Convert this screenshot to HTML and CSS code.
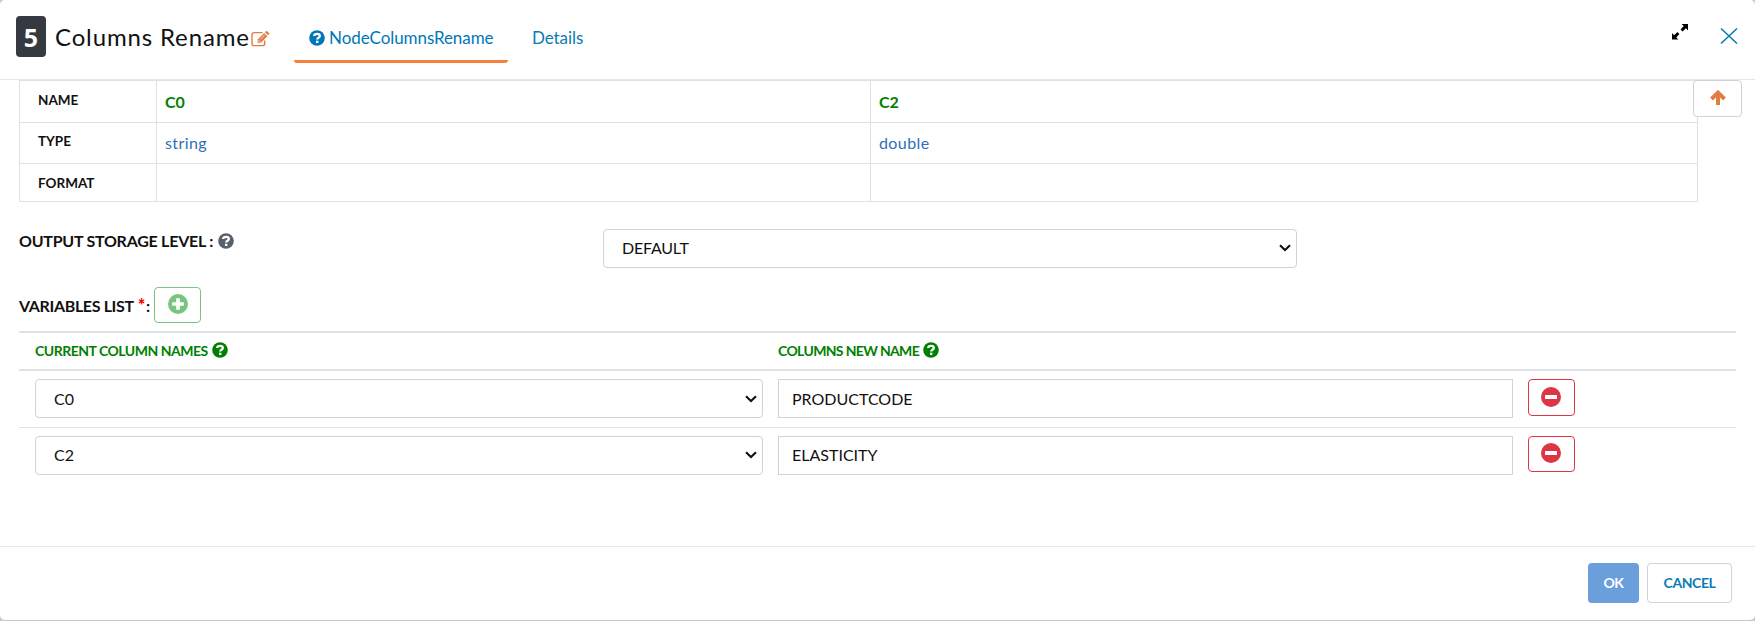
FILE: index.html
```html
<!DOCTYPE html>
<html lang="en">
<head>
<meta charset="utf-8">
<title>Columns Rename</title>
<link rel="stylesheet" href="styles.css">
</head>
<body>
<svg class="defs" width="0" height="0">
  <symbol id="help" viewBox="0 0 16 16"><circle cx="8" cy="8" r="7.8" fill="currentColor"/><path d="M5.2 6C5.4 3.1 10.8 3.1 10.8 6C10.8 7.8 8.2 7.7 8.2 9.6" fill="none" stroke="#fff" stroke-width="2.3"/><rect x="7" y="10.7" width="2.4" height="2.3" fill="#fff"/></symbol>
  <symbol id="minus" viewBox="0 0 20 20"><circle cx="10" cy="10" r="10" fill="currentColor"/><rect x="4" y="8" width="12" height="4" rx=".5" fill="#fff"/></symbol>
  <symbol id="chevron" viewBox="0 0 12 8"><path d="M1 1.2L6 6L11 1.2" fill="none" stroke="#111" stroke-width="2.1"/></symbol>
</svg>
<div class="modal">
  <header class="header">
    <span class="badge">5</span>
    <h1 class="title">Columns Rename</h1>
    <svg class="edit" viewBox="0 0 19 16"><path d="M11.5 1.6H3.2Q1 1.6 1 3.8V12.4Q1 14.6 3.2 14.6H11.5Q13.7 14.6 13.7 12.4V9.6" fill="none" stroke="#e27c45" stroke-width="1.4"/><path d="M6.6 8.6L13.2 2L16.4 5.2L9.8 11.8H6.6Z" fill="#e27c45"/><path d="M14 1.2L15 .3Q15.6-.2 16.2.3L18 2.1Q18.6 2.7 18 3.4L17.1 4.3Z" fill="#e27c45"/><path d="M7.6 9.2L9.3 10.9" stroke="#fff"/><path d="M9.4 8.2L13.6 4" stroke="#fff" stroke-width=".7"/></svg>
    <nav class="tabs">
      <a class="tab active"><svg class="help"><use href="#help"/></svg><span>NodeColumnsRename</span></a>
      <a class="tab"><span>Details</span></a>
    </nav>
    <svg class="expand" viewBox="0 0 16 16"><path d="M9.6 0H16V6.4L13.9 4.3L10.6 7.4L8.6 5.4L11.7 2.1ZM6.4 15.5H0V9.1L2.1 11.2L5.4 8L7.4 10L4.3 13.4Z" fill="#000"/></svg>
    <svg class="close" viewBox="0 0 18 16"><path d="M1 .5L17 15.5M17 .5L1 15.5" stroke="#0a7cb3" stroke-width="1.5"/></svg>
  </header>
  <main class="body">
    <table class="schema">
      <tr class="r1"><th>NAME</th><td class="col">C0</td><td class="col">C2</td></tr>
      <tr class="r2"><th>TYPE</th><td>string</td><td>double</td></tr>
      <tr class="r3"><th>FORMAT</th><td></td><td></td></tr>
    </table>
    <button class="up"><svg width="16" height="15" viewBox="0 0 16 15"><path d="M8 2V15M1.5 9L8 2.6L14.5 9" fill="none" stroke="#e27c45" stroke-width="4"/></svg></button>
    <div class="storage">
      <label class="label"><span class="t-storage">OUTPUT STORAGE LEVEL :</span><svg class="help gray"><use href="#help"/></svg></label>
      <div class="select wide"><span>DEFAULT</span><svg class="chev"><use href="#chevron"/></svg></div>
    </div>
    <div class="variables">
      <span>VARIABLES LIST <b>*</b>:</span>
      <button class="btn add"><svg width="20" height="20" viewBox="0 0 20 20"><circle cx="10" cy="10" r="10" fill="#79c580"/><path d="M10 4.2V15.8M4.2 10H15.8" stroke="#fff" stroke-width="3.6"/></svg></button>
    </div>
    <div class="grid head">
      <div class="th"><span>CURRENT COLUMN NAMES</span><svg class="help"><use href="#help"/></svg></div>
      <div class="th new"><span>COLUMNS NEW NAME</span><svg class="help"><use href="#help"/></svg></div>
    </div>
    <div class="grid row">
      <div class="select"><span>C0</span><svg class="chev"><use href="#chevron"/></svg></div>
      <div class="input">PRODUCTCODE</div>
      <button class="btn del"><svg width="20" height="20"><use href="#minus"/></svg></button>
    </div>
    <div class="grid row last">
      <div class="select"><span>C2</span><svg class="chev"><use href="#chevron"/></svg></div>
      <div class="input">ELASTICITY</div>
      <button class="btn del"><svg width="20" height="20"><use href="#minus"/></svg></button>
    </div>
  </main>
  <footer class="footer">
    <button class="ok">OK</button>
    <button class="cancel">CANCEL</button>
  </footer>
</div>
</body>
</html>
```

FILE: styles.css
```css
* { box-sizing: border-box; }
body { margin: 0; background: #c9c9c9; font: 16px/20px Lato, sans-serif; color: #111; }
.defs { display: none; }
svg { display: block; flex: none; }
button { font: inherit; padding: 0; background: #fff; display: flex; justify-content: center; }
.modal { position: relative; width: 1755px; height: 620px; background: #fff; border-radius: 5px; display: flex; flex-direction: column; overflow: hidden; }
.header { height: 80px; flex: none; border-bottom: 1px solid #e5e6e8; display: flex; align-items: flex-start; padding-left: 16px; }
.badge { width: 30px; height: 41px; margin-top: 16px; border-radius: 4px; background: #343a40; color: #fff; font: bold 25px/43px "Open Sans", sans-serif; text-align: center; }
.title { margin: 22px 0 0 9px; width: 196px; font-size: 24px; line-height: 30px; font-weight: 400; letter-spacing: .86px; white-space: nowrap; }
.edit { width: 19px; height: 16px; margin-top: 31px; }
.tabs { display: flex; margin-left: 24px; }
.tab { height: 63px; display: flex; padding: 28px 15px 0; color: #0a7cb3; font-size: 17px; letter-spacing: -.07px; }
.tab.active { width: 214px; border-bottom: 3px solid #f6803d; border-radius: 3px; color: #0077b8; }
.tab:last-child { padding-left: 24px; }
.help { width: 16px; height: 16px; }
.tab .help { margin: 2px 4px 0 0; }
.expand { width: 16px; height: 16px; margin: 24px 32px 0 auto; }
.close { width: 18px; height: 16px; margin: 28px 17px 0 0; }
.body { flex: 1; padding: 0 19px; }
.schema { width: 1679px; table-layout: fixed; border-collapse: collapse; margin-top: 0; }
.schema th, .schema td { border: 1px solid #dee2e6; padding: 0; vertical-align: top; text-align: left; }
.schema th { width: 137px; padding: 9px 0 0 18px; font-size: 13.5px; }
.schema td { padding: 10px 0 0 8px; color: #2f6fb7; font-size: 16px; letter-spacing: .4px; }
.schema td:nth-child(2) { width: 714px; }
.schema .col { color: #008000; font-weight: 700; padding-top: 11px; letter-spacing: 0; }
.r1 { height: 42px; }
.r2 { height: 41px; }
.r3 { height: 38px; }
.schema .r2 th { padding-top: 8px; }
.up { position: absolute; left: 1693px; top: 80px; width: 49px; height: 37px; padding-top: 9px; border: 1px solid #ced4da; border-radius: 4px; }
.storage { display: flex; margin-top: 27px; height: 40px; }
.label { width: 584px; display: flex; font-weight: 700; font-size: 16px; padding-top: 2px; }
.t-storage { letter-spacing: -.25px; }
.gray { color: #59616a; margin: 2px 0 0 5px; }
.select { height: 39px; border: 1px solid #ced4da; border-radius: 4px; display: flex; align-items: center; padding: 0 5px 0 18px; }
.wide { width: 694px; padding-bottom: 1px; }
.wide span { letter-spacing: -.2px; }
.chev { width: 12px; height: 8px; margin-left: auto; }
.variables { display: flex; margin-top: 18px; height: 44px; font-weight: 700; font-size: 16px; }
.variables > span { width: 135px; padding-top: 9px; white-space: nowrap; letter-spacing: -.35px; }
.variables b { color: red; font-size: 18px; line-height: 16px; margin: 0 1px; }
.btn { width: 47px; height: 37px; border: 1px solid #dc3545; border-radius: 4px; padding: 7px 0 0; color: #dc3545; }
.del { padding-right: 1px; }
.add { border-color: #79c580; height: 36px; padding: 6px 0 0; }
.grid { display: grid; grid-template-columns: 728px 735px 47px; gap: 15px; padding-left: 16px; width: 1717px; }
.head { height: 40px; border-top: 2px solid #dee2e6; border-bottom: 2px solid #dee2e6; color: #008000; font-weight: 700; font-size: 14px; letter-spacing: -.49px; }
.th { display: flex; padding-top: 8px; }
.th .help { margin: 1px 0 0 4px; }
.new { letter-spacing: -.65px; }
.row { padding-top: 8px; height: 57px; border-bottom: 1px solid #dee2e6; align-items: start; }
.last { border: 0; }
.last .del { height: 36px; padding-top: 6px; }
.input { height: 39px; border: 1px solid #ced4da; padding: 9px 0 0 13px; }
.last .input { padding-top: 8px; }
.last .select { padding-bottom: 1px; }
.footer { height: 74px; border-top: 1px solid #e5e6e8; display: flex; justify-content: flex-end; gap: 8px; padding: 16px 23px 0 0; }
.ok, .cancel { height: 40px; border-radius: 4px; align-items: center; font-weight: 700; font-size: 14px; letter-spacing: -.4px; }
.ok { width: 51px; background: #6a9fdb; border: 0; color: #fff; }
.cancel { width: 85px; border: 1px solid #ced4da; color: #0a7cb3; }
```
